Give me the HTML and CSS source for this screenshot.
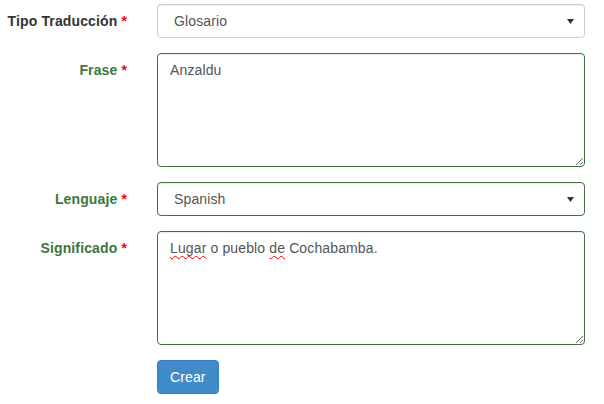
FILE: index.html
```html
<!DOCTYPE html>
<html lang="es">
<head>
<meta charset="utf-8">
<title>Crear traducción</title>
<link rel="stylesheet" href="styles.css">
</head>
<body>
<form class="form-horizontal">
  <div class="form-group">
    <label class="control-label" for="tipo">Tipo Traducción <span class="req">*</span></label>
    <div class="select-wrap">
      <select id="tipo" class="form-control">
        <option>Glosario</option>
      </select>
      <svg class="caret" width="7" height="5" viewBox="0 0 7 5"><path d="M0 0h7L3.5 5z" fill="#333"/></svg>
    </div>
  </div>
  <div class="form-group has-success">
    <label class="control-label" for="frase">Frase <span class="req">*</span></label>
    <textarea id="frase" class="form-control" rows="5">Anzaldu</textarea>
  </div>
  <div class="form-group has-success">
    <label class="control-label" for="lenguaje">Lenguaje <span class="req">*</span></label>
    <div class="select-wrap">
      <select id="lenguaje" class="form-control">
        <option>Spanish</option>
      </select>
      <svg class="caret" width="7" height="5" viewBox="0 0 7 5"><path d="M0 0h7L3.5 5z" fill="#333"/></svg>
    </div>
  </div>
  <div class="form-group has-success">
    <label class="control-label" id="significado-label">Significado <span class="req">*</span></label>
    <div class="form-control textarea" role="textbox" aria-multiline="true" aria-labelledby="significado-label" contenteditable="true"><span class="misspelled">Lugar</span> o pueblo <span class="misspelled">de</span> Cochabamba.</div>
  </div>
  <div class="form-group">
    <span></span>
    <div><button type="submit" class="btn btn-primary">Crear</button></div>
  </div>
</form>
</body>
</html>
```
FILE: styles.css
```css
* { box-sizing: border-box; }
html, body { margin: 0; background: #fff; }
body {
  font-family: "Liberation Sans", Arial, Helvetica, sans-serif;
  font-size: 14px;
  line-height: 20px;
  color: #333;
  padding-top: 4px;
  letter-spacing: 0.13px;
}
.form-horizontal { width: 585px; }
.form-group {
  display: grid;
  grid-template-columns: 127px 428px;
  column-gap: 30px;
  margin-bottom: 15px;
}
.control-label {
  text-align: right;
  font-weight: bold;
  padding-top: 7px;
  margin: 0;
}
.req { color: #f00; }
.has-success .control-label { color: #3c763d; }
.form-control {
  display: block;
  width: 100%;
  height: 34px;
  padding: 6px 12px;
  font-family: inherit;
  font-size: 14px;
  line-height: 20px;
  letter-spacing: inherit;
  color: #555;
  background: #fff;
  border: 1px solid #ccc;
  border-radius: 4px;
  box-shadow: inset 0 1px 1px rgba(0,0,0,.075);
  margin: 0;
  outline: none;
}
textarea.form-control,
.form-control.textarea { height: 114px; resize: vertical; }
.form-control.textarea { overflow: auto; white-space: pre-wrap; }
.misspelled {
  text-decoration: underline wavy #e00;
  text-decoration-thickness: 1px;
  text-underline-offset: 2px;
  text-decoration-skip-ink: none;
}
select.form-control {
  -webkit-appearance: none;
  appearance: none;
  padding-left: 16px;
}
.has-success .form-control {
  border-color: #3c763d;
}
.select-wrap { position: relative; }
.caret {
  position: absolute;
  right: 11px;
  top: 15px;
  pointer-events: none;
}
.btn {
  display: inline-block;
  padding: 6px 12px;
  font-family: inherit;
  font-size: 14px;
  line-height: 20px;
  letter-spacing: inherit;
  border: 1px solid transparent;
  border-radius: 4px;
  cursor: pointer;
  margin: 0;
}
.btn-primary {
  color: #fff;
  background: #428bca;
  border-color: #357ebd;
}
```
